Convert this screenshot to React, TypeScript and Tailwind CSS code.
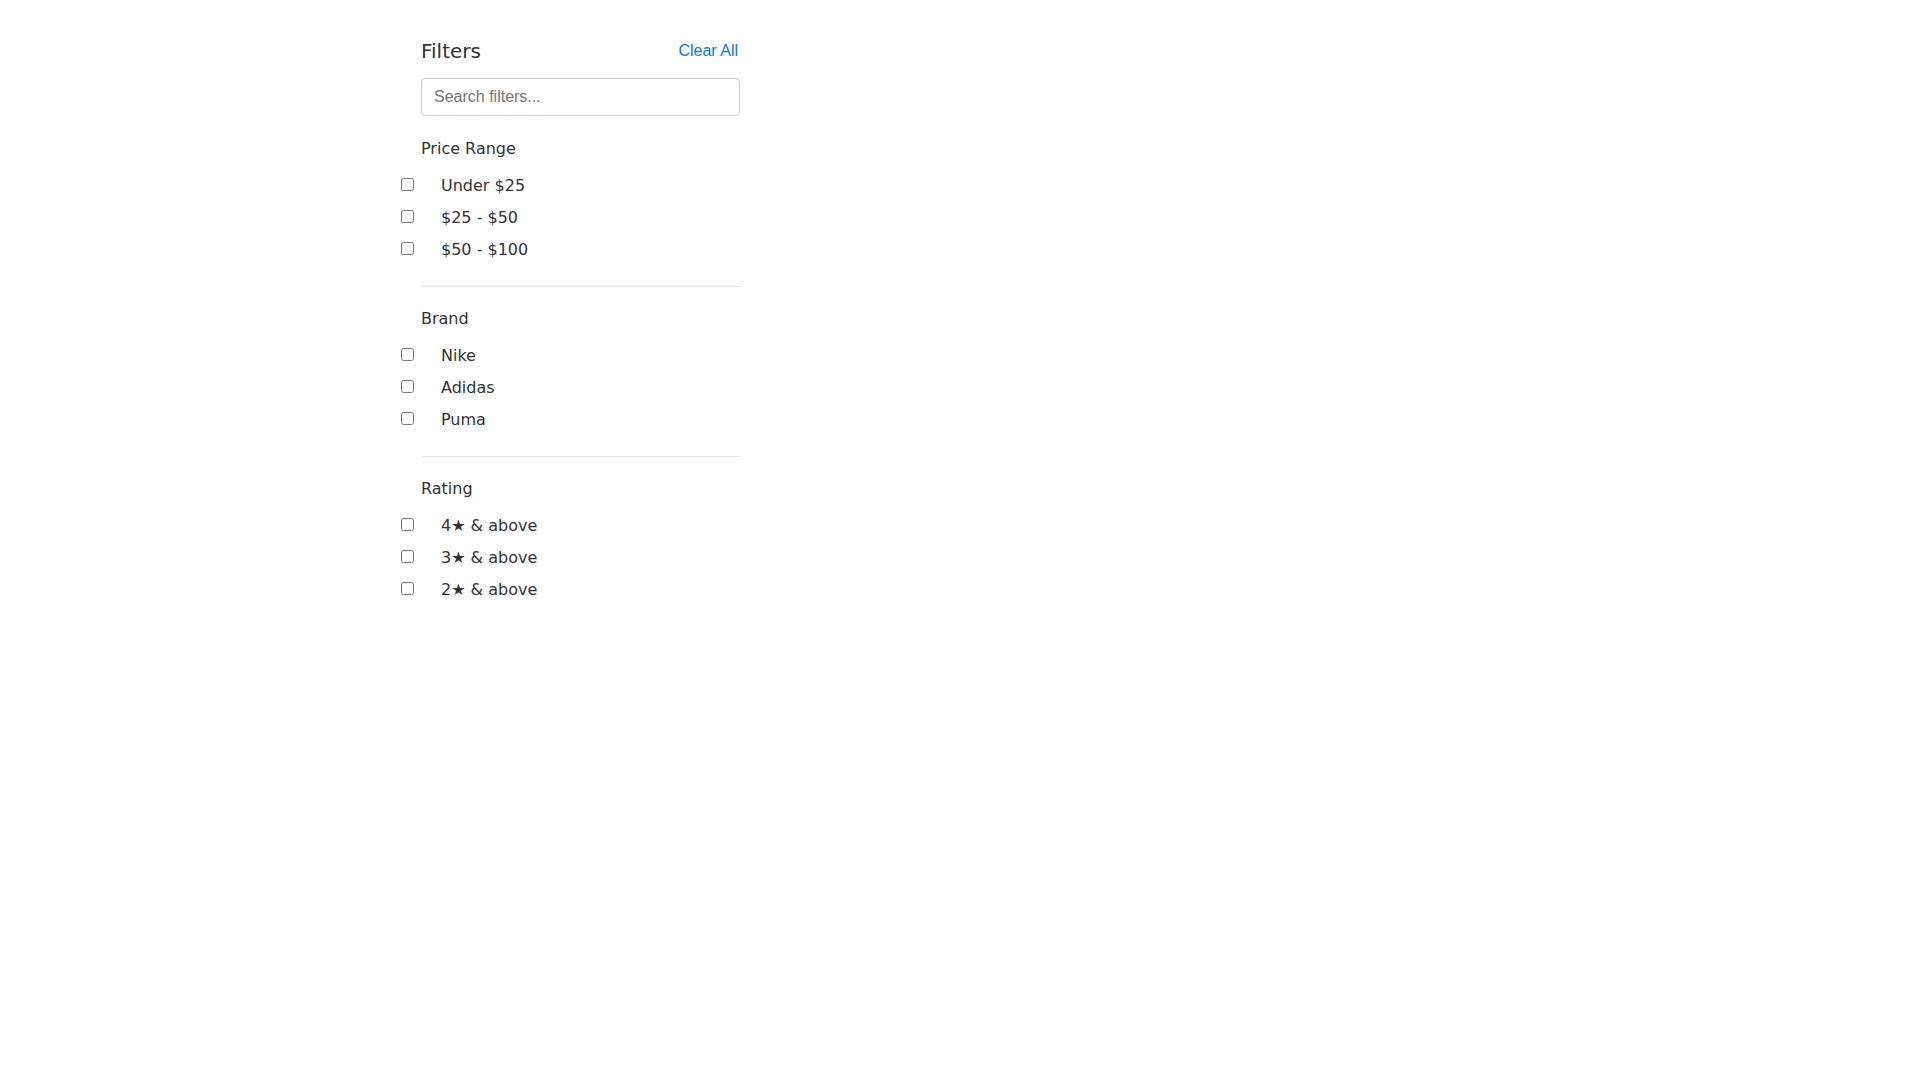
import React from "react";

const sections: { title: string; items: string[] }[] = [
  { title: "Price Range", items: ["Under $25", "$25 - $50", "$50 - $100"] },
  { title: "Brand", items: ["Nike", "Adidas", "Puma"] },
  { title: "Rating", items: ["4★ & above", "3★ & above", "2★ & above"] },
];

export default function App() {
  return (
    <div className="min-h-screen bg-white font-['DejaVu_Sans',sans-serif] text-[#333]">
      <div className="ml-[421px] w-[319px] pt-9">
        <div className="flex h-[30px] items-center justify-between">
          <h2 className="text-[20px] leading-[30px] text-[#333]">Filters</h2>
          <button className="font-['Liberation_Sans',Arial,sans-serif] text-[16px] leading-[18px] text-[#0a7ae0] pr-[2px]">
            Clear All
          </button>
        </div>
        <input
          type="text"
          placeholder="Search filters..."
          className="mt-3 block h-[38px] w-full rounded-[4px] border border-[#cccccc] px-3 font-['Liberation_Sans',Arial,sans-serif] text-[16px] text-[#333] placeholder:text-[#757575] outline-none"
        />
        <div className="pt-px">
          {sections.map((s, i) => (
            <div
              key={s.title}
              className={
                i < sections.length - 1
                  ? "border-b border-[#e6e6e6] pt-5 pb-6"
                  : "pt-5 pb-6"
              }
            >
              <h3 className="mb-[13px] text-[16px] leading-6">{s.title}</h3>
              <div className="flex flex-col gap-2">
                {s.items.map((it) => (
                  <label key={it} className="-ml-5 flex h-6 items-center gap-[27px] text-[16px] leading-6">
                    <input type="checkbox" className="m-0 mb-1 h-[13px] w-[13px]" />
                    <span>{it}</span>
                  </label>
                ))}
              </div>
            </div>
          ))}
        </div>
      </div>
    </div>
  );
}
